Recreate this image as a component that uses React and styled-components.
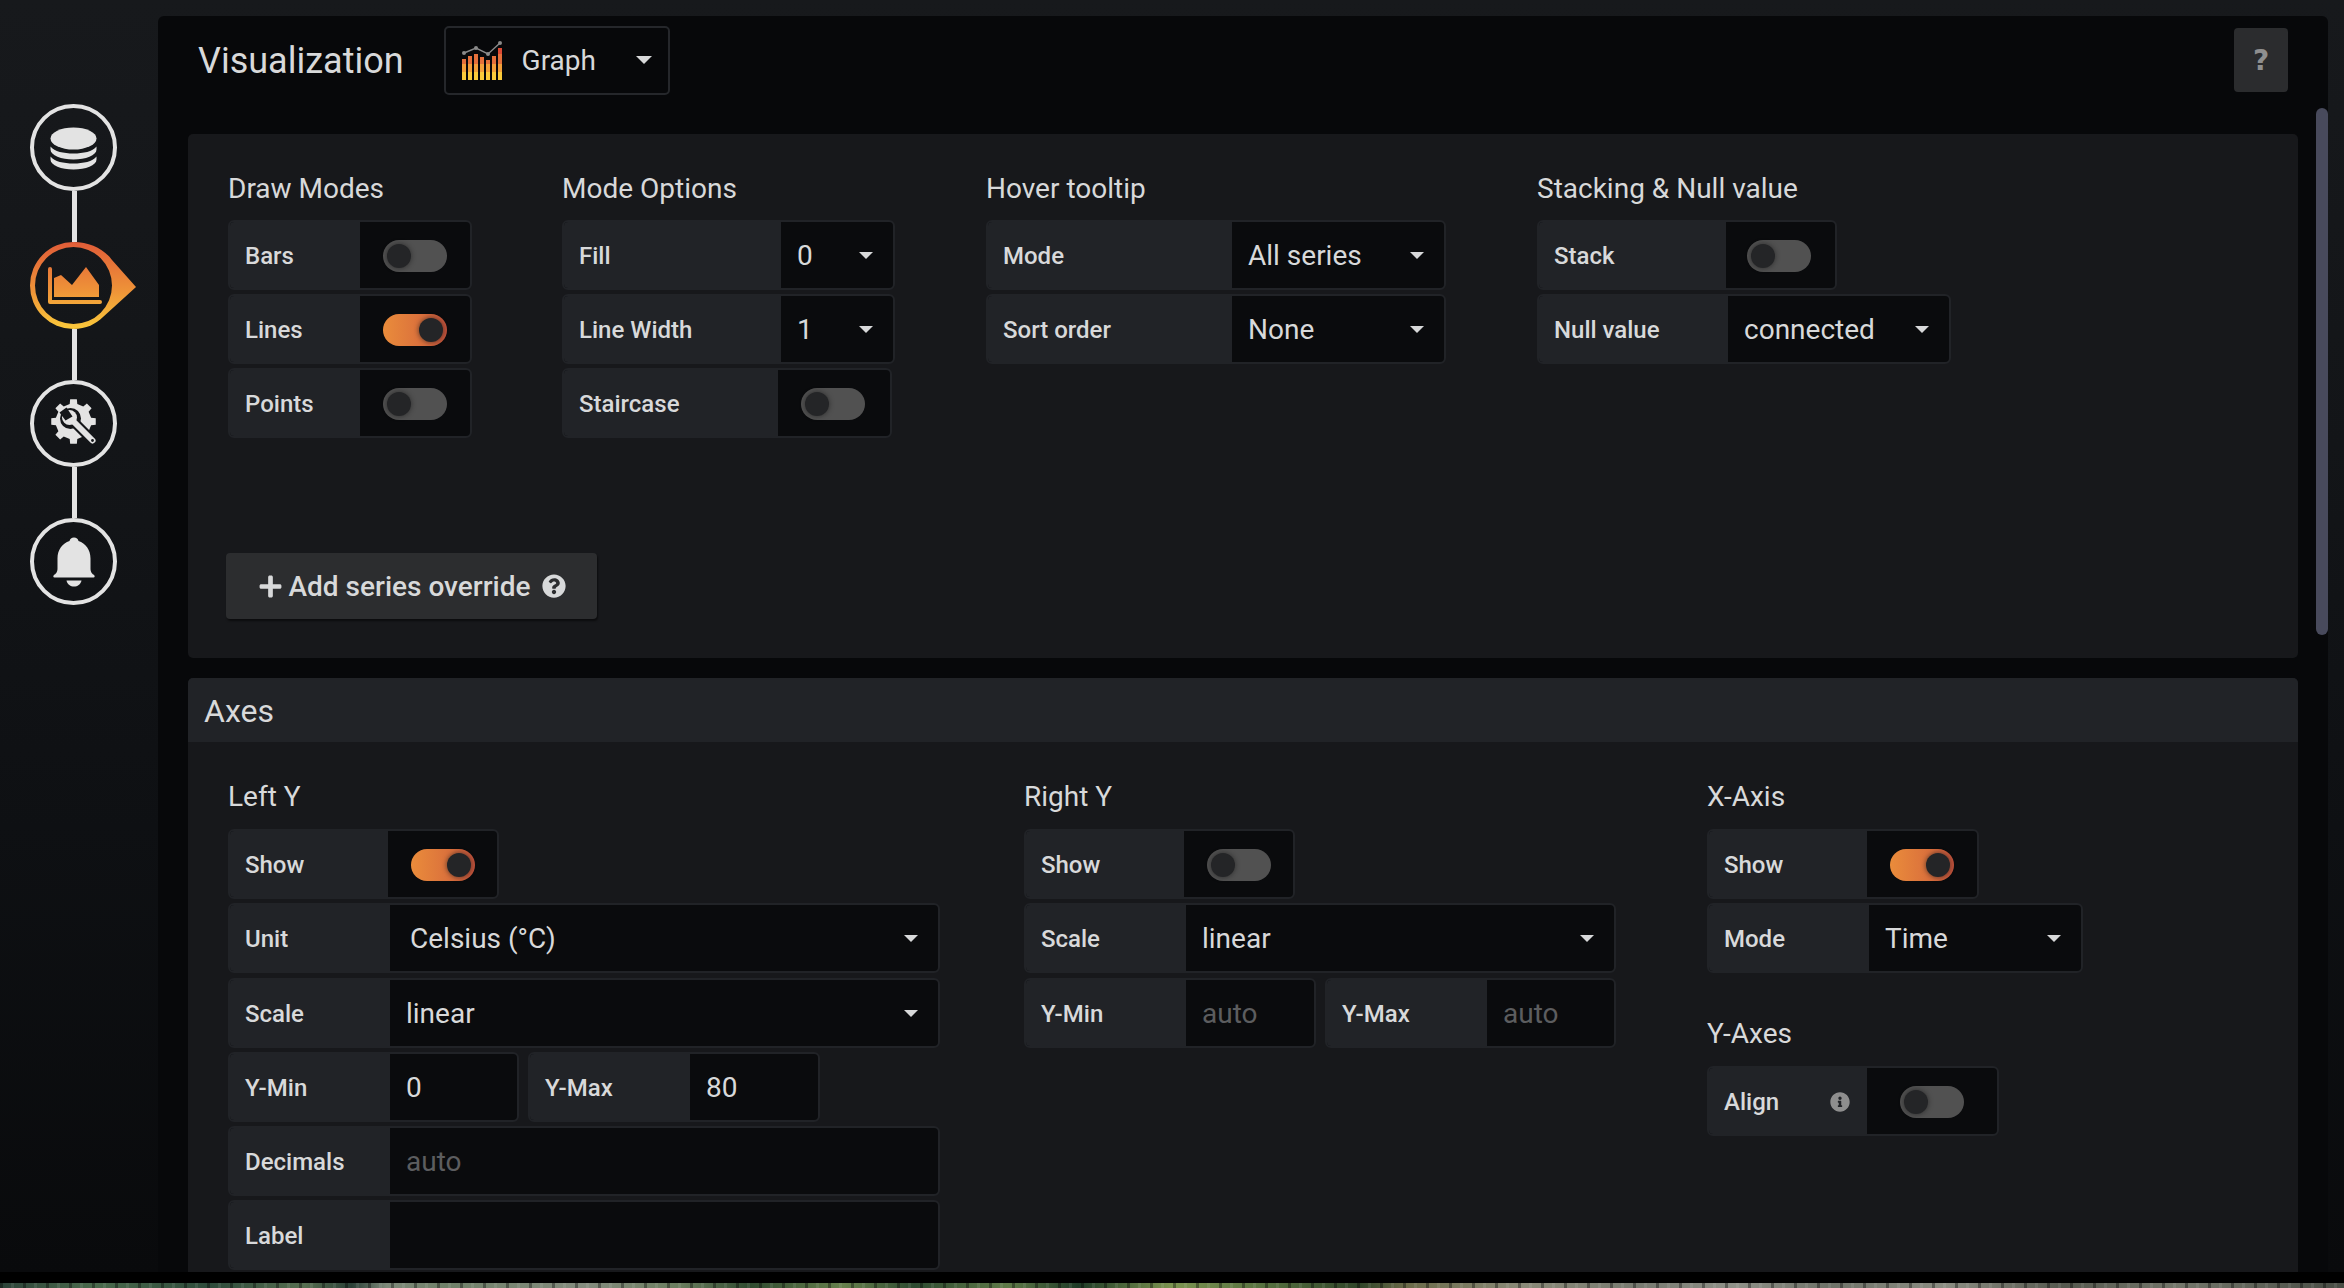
import React from 'react';
import styled, { createGlobalStyle } from 'styled-components';
import { FaPlus, FaQuestionCircle, FaInfoCircle } from 'react-icons/fa';

const GlobalStyle = createGlobalStyle`
  html, body {
    margin: 0;
    padding: 0;
    background: #000;
    overflow: hidden;
  }
  * {
    box-sizing: border-box;
  }
`;

const Page = styled.div`
  width: 2344px;
  height: 1288px;
  display: flex;
  flex-direction: column;
  font-family: Roboto, "Liberation Sans", sans-serif;
  color: #d8d9da;
  background: #000;
  overflow: hidden;
`;

const Workspace = styled.div`
  height: 1272px;
  flex: none;
  display: flex;
  padding-top: 16px;
  background: linear-gradient(180deg, #17191c 0%, #131518 35%, #0e1013 65%, #090a0c 100%);
`;

const Sidebar = styled.nav`
  width: 158px;
  flex: none;
  padding: 88px 0 0 30px;
  display: flex;
  flex-direction: column;
  align-items: flex-start;
`;

const Step = styled.div`
  width: 87px;
  height: 87px;
  border-radius: 50%;
  border: ${(p) => (p.$active ? 'none' : '4.5px solid #e3e3e3')};
  position: relative;
  flex: none;
  display: flex;
  align-items: center;
  justify-content: center;
  svg {
    display: block;
    flex: none;
  }
`;

const Connector = styled.div`
  width: 5px;
  height: 51px;
  margin-left: 41.5px;
  background: #e3e3e3;
  flex: none;
`;

const Panel = styled.main`
  width: 2170px;
  flex: none;
  position: relative;
  background: #07080a;
  border-radius: 6px 6px 0 0;
  display: flex;
  flex-direction: column;
  overflow: hidden;
`;

const Scrollbar = styled.div`
  position: absolute;
  right: 0;
  top: 92px;
  width: 12px;
  height: 527px;
  border-radius: 6px;
  background: #484a5c;
`;

const Header = styled.header`
  height: 88px;
  margin-bottom: 30px;
  flex: none;
  display: flex;
  align-items: center;
  padding: 0 40px;
`;

const Title = styled.h1`
  margin: 2px 40px 0 0;
  font-size: 36px;
  font-weight: 400;
  line-height: 40px;
  color: #d8d9da;
`;

const PickerButton = styled.div`
  width: 226px;
  height: 69px;
  display: flex;
  align-items: center;
  padding-left: 16px;
  border: 2px solid #25272b;
  border-radius: 5px;
  font-size: 28px;
  svg {
    flex: none;
  }
  span {
    margin-left: 19px;
    flex: 1;
  }
`;

const HelpButton = styled.div`
  margin-left: auto;
  width: 54px;
  height: 64px;
  border-radius: 4px;
  background: #2b2c2e;
  color: #8f8f8f;
  font-family: "DejaVu Sans", sans-serif;
  font-size: 28px;
  font-weight: 700;
  display: flex;
  align-items: center;
  justify-content: center;
`;

const Content = styled.div`
  width: 2110px;
  margin-left: 30px;
  flex: 1;
  display: flex;
  flex-direction: column;
  gap: 20px;
`;

const Card = styled.section`
  height: 524px;
  flex: none;
  background: #17181b;
  border-radius: 5px;
  padding: 39px 0 0 40px;
`;

const AxesCard = styled.section`
  flex: 1;
  background: #17181b;
  border-radius: 5px 5px 0 0;
`;

const CardHeader = styled.h2`
  margin: 0;
  height: 64px;
  padding: 2px 0 0 16px;
  display: flex;
  align-items: center;
  font-size: 32px;
  font-weight: 400;
  background: #212327;
  border-radius: 5px 5px 0 0;
  color: #d8d9da;
`;

const Columns = styled.div`
  display: grid;
  grid-template-columns: ${(p) => p.$cols};
  align-items: start;
`;

const Column = styled.div`
  display: flex;
  flex-direction: column;
  gap: 4px;
`;

const GroupTitle = styled.h3`
  margin: ${(p) => (p.$spaced ? '45px' : '0')} 0 15px;
  height: 32px;
  line-height: 32px;
  font-size: 28px;
  font-weight: 400;
  color: #d8d9da;
`;

const AxesBody = styled(Columns)`
  padding: 39px 0 0 40px;
  ${GroupTitle} {
    margin-bottom: 16px;
  }
  ${Column} {
    gap: 4.3px;
  }
`;

const Pair = styled.div`
  display: flex;
  gap: 9px;
`;

const FieldBox = styled.div`
  width: ${(p) => p.$w}px;
  height: 70px;
  flex: none;
  display: flex;
  border: 2px solid #212327;
  border-radius: 6px;
  background: #0a0b0d;
  overflow: hidden;
`;

const FieldLabel = styled.div`
  width: ${(p) => p.$l}px;
  flex: none;
  display: flex;
  align-items: center;
  justify-content: space-between;
  padding: 2px 17px 0 15px;
  background: #212327;
  font-size: 24px;
  font-weight: 500;
  color: #d8d9da;
  svg {
    color: #8e8e8e;
    font-size: 20px;
  }
`;

const FieldValue = styled.div`
  flex: 1;
  display: flex;
  align-items: center;
  justify-content: space-between;
  padding: 1px 20px 0 ${(p) => p.$pad ?? 16}px;
  font-size: 28px;
  color: ${(p) => (p.$muted ? '#5c5d5f' : '#d8d9da')};
`;

const Caret = styled.i`
  width: 0;
  height: 0;
  flex: none;
  margin-right: ${(p) => p.$mr ?? 0}px;
  border-left: ${(p) => p.$size ?? 7}px solid transparent;
  border-right: ${(p) => p.$size ?? 7}px solid transparent;
  border-top: ${(p) => p.$size ?? 7}px solid #d8d9da;
`;

const ToggleTrack = styled.div`
  width: 64px;
  height: 32px;
  flex: none;
  position: relative;
  border-radius: 16px;
  background: ${(p) =>
    p.$on ? 'linear-gradient(90deg, #ea8c3b 0%, #d96e3c 65%, #c0503a 100%)' : '#515151'};
`;

const ToggleKnob = styled.span`
  position: absolute;
  top: 4px;
  left: ${(p) => (p.$on ? '36px' : '4px')};
  width: 24px;
  height: 24px;
  border-radius: 50%;
  background: #242527;
  box-shadow: 0 0 4px 1px rgba(30, 30, 30, 0.5);
`;

const AddButton = styled.button`
  width: 371px;
  height: 66px;
  margin: 115px 0 0 -2px;
  display: flex;
  align-items: center;
  justify-content: center;
  gap: 6px;
  border: none;
  border-radius: 4px;
  background: #2c2d2f;
  box-shadow: 1px 2px 2px rgba(0, 0, 0, 0.5);
  color: #d8d9da;
  font-family: inherit;
  font-size: 28px;
  font-weight: 500;
  svg {
    flex: none;
    font-size: 25px;
  }
  svg:last-child {
    font-size: 24px;
    margin-left: 5px;
  }
`;

const Photo = styled.div`
  height: 5px;
  margin-top: 11px;
  flex: none;
  background:
    repeating-linear-gradient(
      90deg,
      rgba(0, 0, 0, 0.35) 0 3px,
      transparent 3px 11px,
      rgba(255, 255, 255, 0.08) 11px 14px,
      transparent 14px 23px
    ),
    linear-gradient(
      90deg,
      #2c4238 0%, #4a6a4c 4%, #2d4a3a 9%, #566e50 13%, #2a3f36 15%, #7e8a7a 16.5%, #6f8068 19%,
      #848c7e 25%, #6a7d5e 29%, #2f4a2f 32%, #66804c 36%, #2d4a30 39%, #5f7a48 43%, #1e3a26 46%,
      #7c9450 50%, #55703f 54%, #2f4428 58%, #6a6a48 60%, #8a8a78 65%, #777a70 70%, #8f9188 74%,
      #6e7268 78%, #8b8d82 83%, #55584e 88%, #73766a 93%, #484c44 100%
    );
`;

function Toggle({ on }) {
  return (
    <ToggleTrack $on={on}>
      <ToggleKnob $on={on} />
    </ToggleTrack>
  );
}

function Field({ label, w, l, value, muted, caret, toggle, on, pad, info }) {
  return (
    <FieldBox $w={w}>
      <FieldLabel $l={l}>
        {label}
        {info && <FaInfoCircle />}
      </FieldLabel>
      <FieldValue $pad={pad ?? (toggle ? 23 : undefined)} $muted={muted}>
        {toggle ? <Toggle on={on} /> : <span>{value}</span>}
        {caret && <Caret />}
      </FieldValue>
    </FieldBox>
  );
}

const GraphIcon = () => {
  const bars = [19, 16, 14, 17, 20, 16, 8];
  return (
    <svg width="41" height="40" viewBox="0 0 41 40">
      <defs>
        <linearGradient id="barFill" gradientUnits="userSpaceOnUse" x1="0" y1="0" x2="0" y2="40">
          <stop offset="0.35" stopColor="#dc4a35" />
          <stop offset="0.35" stopColor="#e4703b" />
          <stop offset="0.6" stopColor="#e4703b" />
          <stop offset="0.6" stopColor="#f3a03a" />
          <stop offset="0.8" stopColor="#f3a03a" />
          <stop offset="0.8" stopColor="#fbca3a" />
        </linearGradient>
      </defs>
      {bars.map((top, i) => (
        <rect key={i} x={i * 6} y={top} width="4" height={40 - top} fill="url(#barFill)" />
      ))}
      <polyline points="2,13 14,8 26,14 38,3" fill="none" stroke="#8a8a8a" strokeWidth="1.4" />
      <circle cx="2" cy="13" r="2" fill="#8a8a8a" />
      <circle cx="14" cy="8" r="2" fill="#8a8a8a" />
      <circle cx="26" cy="14" r="2" fill="#8a8a8a" />
      <circle cx="38" cy="3" r="2" fill="#8a8a8a" />
    </svg>
  );
};

const DatabaseIcon = () => (
  <svg width="78" height="78" viewBox="4.5 4.5 78 78" fill="#e3e3e3">
    <ellipse cx="43" cy="34" rx="23" ry="11" />
    <path d="M20 42C24 47 33 49 43 49S62 47 66 42V45C66 51 55 55 43 55S20 51 20 45Z" />
    <path d="M20 52C24 57 33 59 43 59S62 57 66 52V55C66 61 55 65 43 65S20 61 20 55Z" />
  </svg>
);

// pin shaped ring of the active step
const ActiveIcon = () => (
  <svg
    width="110"
    height="87"
    viewBox="0 0 110 87"
    style={{ position: 'absolute', left: 0, top: 0 }}
  >
    <defs>
      <linearGradient id="pinFill" gradientUnits="userSpaceOnUse" x1="0" y1="0" x2="0" y2="87">
        <stop offset="0" stopColor="#e05c38" />
        <stop offset="0.55" stopColor="#ee9238" />
        <stop offset="1" stopColor="#fbc93b" />
      </linearGradient>
    </defs>
    <path
      fill="url(#pinFill)"
      fillRule="evenodd"
      d="M43.5 0A43.5 43.5 0 0 0 43.5 87C56 87 66 82 73 75L106 45L82 18C74 7 60 0 43.5 0ZM43.5 5A38.5 38.5 0 1 1 43.5 82A38.5 38.5 0 1 1 43.5 5Z"
    />
    <path fill="url(#pinFill)" d="M24 36L31 33L42 43L56 25L69 43V55H24Z" />
    <path
      fill="none"
      stroke="url(#pinFill)"
      strokeWidth="4"
      strokeLinecap="round"
      strokeLinejoin="round"
      d="M20 27V60H70"
    />
  </svg>
);

const gearPath = (cx, cy, outer, inner, teeth) => {
  let d = '';
  const step = (Math.PI * 2) / teeth;
  for (let i = 0; i < teeth; i++) {
    const a = i * step - Math.PI / 2;
    const pts = [
      [inner, a - step * 0.27],
      [outer, a - step * 0.19],
      [outer, a + step * 0.19],
      [inner, a + step * 0.27],
    ];
    pts.forEach(([r, t], j) => {
      const x = (cx + r * Math.cos(t)).toFixed(2);
      const y = (cy + r * Math.sin(t)).toFixed(2);
      d += `${i === 0 && j === 0 ? 'M' : 'L'}${x} ${y}`;
    });
  }
  return `${d}Z`;
};

const SettingsIcon = () => (
  <svg width="78" height="78" viewBox="4.5 4.5 78 78">
    <path d={gearPath(43, 41, 22.5, 18, 8)} fill="#e3e3e3" />
    <circle cx="40" cy="38" r="10.5" fill="#141619" />
    <path d="M40 38L62 60" stroke="#141619" strokeWidth="10" strokeLinecap="round" />
    <path d="M40 38L62 60" stroke="#e3e3e3" strokeWidth="6" strokeLinecap="round" />
    <circle cx="39" cy="37" r="7.5" fill="#e3e3e3" />
    <path d="M36 27L42 36L35 40L29 32Z" fill="#141619" />
    <circle cx="62" cy="60" r="1.4" fill="#141619" />
  </svg>
);

const BellIcon = () => (
  <svg width="78" height="78" viewBox="4.5 4.5 78 78" fill="#e3e3e3">
    <path d="M43.5 19C41 19 39.5 20.5 39 22.5C32 25 27 31 27 40V50C27 54 25 55.5 23.5 56.5C22.5 57.2 22.5 59 24 59H63C64.5 59 64.5 57.2 63.5 56.5C62 55.5 60 54 60 50V40C60 31 55 25 48 22.5C47.5 20.5 46 19 43.5 19Z" />
    <path d="M36 62H51C50 66 47 68 43.5 68S37 66 36 62Z" />
  </svg>
);

export default function App() {
  return (
    <Page>
      <GlobalStyle />
      <Workspace>
        <Sidebar>
          <Step>
            <DatabaseIcon />
          </Step>
          <Connector />
          <Step $active>
            <ActiveIcon />
          </Step>
          <Connector />
          <Step>
            <SettingsIcon />
          </Step>
          <Connector />
          <Step>
            <BellIcon />
          </Step>
        </Sidebar>
        <Panel>
          <Scrollbar />
          <Header>
            <Title>Visualization</Title>
            <PickerButton>
              <GraphIcon />
              <span>Graph</span>
              <Caret $size={8} $mr={16} />
            </PickerButton>
            <HelpButton>?</HelpButton>
          </Header>
          <Content>
            <Card>
              <Columns $cols="334px 424px 551px auto">
                <div>
                  <GroupTitle>Draw Modes</GroupTitle>
                  <Column>
                    <Field label="Bars" w={244} l={130} toggle />
                    <Field label="Lines" w={244} l={130} toggle on />
                    <Field label="Points" w={244} l={130} toggle />
                  </Column>
                </div>
                <div>
                  <GroupTitle>Mode Options</GroupTitle>
                  <Column>
                    <Field label="Fill" w={333} l={217} value="0" caret />
                    <Field label="Line Width" w={333} l={217} value="1" caret />
                    <Field label="Staircase" w={330} l={214} toggle />
                  </Column>
                </div>
                <div>
                  <GroupTitle>Hover tooltip</GroupTitle>
                  <Column>
                    <Field label="Mode" w={460} l={244} value="All series" caret />
                    <Field label="Sort order" w={460} l={244} value="None" caret />
                  </Column>
                </div>
                <div>
                  <GroupTitle>Stacking &amp; Null value</GroupTitle>
                  <Column>
                    <Field label="Stack" w={300} l={187} toggle pad={21} />
                    <Field label="Null value" w={414} l={189} value="connected" caret />
                  </Column>
                </div>
              </Columns>
              <AddButton>
                <FaPlus />
                Add series override
                <FaQuestionCircle />
              </AddButton>
            </Card>
            <AxesCard>
              <CardHeader>Axes</CardHeader>
              <AxesBody $cols="796px 683px auto">
                <div>
                  <GroupTitle>Left Y</GroupTitle>
                  <Column>
                    <Field label="Show" w={271} l={158} toggle on />
                    <Field label="Unit" w={712} l={160} value="Celsius (°C)" caret pad={20} />
                    <Field label="Scale" w={712} l={160} value="linear" caret />
                    <Pair>
                      <Field label="Y-Min" w={291} l={160} value="0" />
                      <Field label="Y-Max" w={292} l={160} value="80" />
                    </Pair>
                    <Field label="Decimals" w={712} l={160} value="auto" muted />
                    <Field label="Label" w={712} l={160} />
                  </Column>
                </div>
                <div>
                  <GroupTitle>Right Y</GroupTitle>
                  <Column>
                    <Field label="Show" w={271} l={158} toggle />
                    <Field label="Scale" w={592} l={160} value="linear" caret />
                    <Pair>
                      <Field label="Y-Min" w={292} l={160} value="auto" muted />
                      <Field label="Y-Max" w={291} l={160} value="auto" muted />
                    </Pair>
                  </Column>
                </div>
                <div>
                  <GroupTitle>X-Axis</GroupTitle>
                  <Column>
                    <Field label="Show" w={272} l={158} toggle on />
                    <Field label="Mode" w={376} l={160} value="Time" caret />
                  </Column>
                  <GroupTitle $spaced>Y-Axes</GroupTitle>
                  <Field label="Align" w={292} l={158} toggle pad={33} info />
                </div>
              </AxesBody>
            </AxesCard>
          </Content>
        </Panel>
      </Workspace>
      <Photo />
    </Page>
  );
}
